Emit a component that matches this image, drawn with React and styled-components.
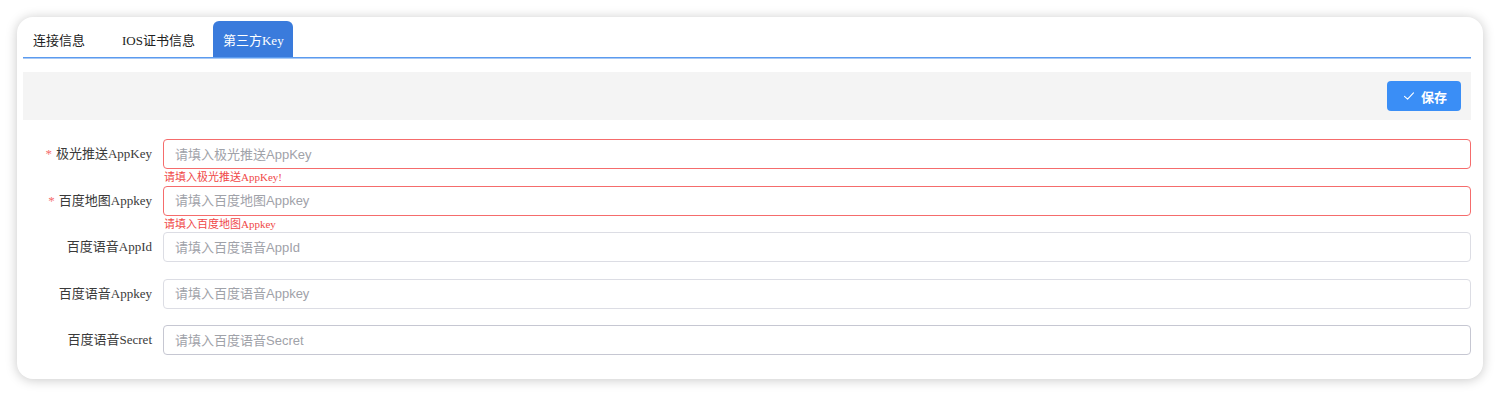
import React from "react";
import styled, { createGlobalStyle } from "styled-components";

const Global = createGlobalStyle`
  html, body { margin: 0; padding: 0; background: #ffffff; }
  body { font-family: "Liberation Serif", "Noto Sans CJK SC", serif; }
  * { box-sizing: border-box; }
`;

const Page = styled.div`
  padding: 17px 17px 17px 17px;
`;

const Card = styled.div`
  background: #ffffff;
  border-radius: 16px;
  box-shadow: 0 1px 12px rgba(0, 0, 0, 0.22);
  padding: 4px 12px 6px 6px;
  height: 362px;
`;

const TabList = styled.div`
  display: flex;
  height: 37px;
  border-bottom: 1px solid #5b9bef;
  box-shadow: 0 1px 0 #a9c9f5;
`;

const Tab = styled.div`
  height: 36px;
  display: flex;
  align-items: center;
  padding: 0 18px;
  font-family: "Liberation Serif", "Noto Sans CJK SC", serif;
  font-size: 13px;
  color: ${(p) => (p.$active ? "#ffffff" : "#222222")};
  background: ${(p) => (p.$active ? "#3a7bdc" : "transparent")};
  border-radius: 6px 6px 0 0;
  &:first-child { padding: 0 19px 0 10px; }
  &:last-child { padding: 0 9px 0 10px; }
`;

const Toolbar = styled.div`
  margin-top: 14px;
  height: 48px;
  background: #f4f4f4;
  display: flex;
  align-items: center;
  justify-content: flex-end;
  padding-right: 10px;
`;

const SaveButton = styled.button`
  width: 74px;
  height: 30px;
  border: none;
  border-radius: 4px;
  background: #3a8ef6;
  color: #ffffff;
  display: flex;
  align-items: center;
  justify-content: center;
  gap: 6px;
  font-family: "Liberation Sans", "Noto Sans CJK SC", sans-serif;
  font-size: 13px;
  font-weight: 600;
  padding: 0 0 0 2px;
`;

const Form = styled.div`
  margin-top: 19px;
`;

const Row = styled.div`
  display: flex;
  align-items: flex-start;
  margin-bottom: 16.5px;
`;

const Label = styled.label`
  width: 140px;
  flex: none;
  text-align: right;
  padding-right: 11px;
  line-height: 30px;
  font-family: "Liberation Serif", "Noto Sans CJK SC", serif;
  font-size: 13px;
  color: #3a3a3a;
`;

const Star = styled.span`
  color: #f56c6c;
  margin-right: 4px;
`;

const Field = styled.div`
  position: relative;
  flex: 1;
`;

const Input = styled.input`
  display: block;
  width: 100%;
  height: 30px;
  border: 1px solid ${(p) => (p.$error ? "#f56c6c" : p.$dark ? "#c6c7d2" : "#dcdde4")};
  border-radius: 4px;
  padding: 0 11px;
  font-family: "Liberation Sans", "Noto Sans CJK SC", sans-serif;
  font-size: 13px;
  color: #333;
  background: #fff;
  outline: none;
  &::placeholder { color: #9fa2a9; }
`;

const ErrorText = styled.div`
  position: absolute;
  left: 1px;
  top: 100%;
  padding-top: 3px;
  font-family: "Liberation Serif", "Noto Sans CJK SC", serif;
  font-size: 11px;
  line-height: 1;
  color: #f04848;
`;

const fields = [
  { label: "极光推送AppKey", required: true, placeholder: "请填入极光推送AppKey", error: "请填入极光推送AppKey!" },
  { label: "百度地图Appkey", required: true, placeholder: "请填入百度地图Appkey", error: "请填入百度地图Appkey" },
  { label: "百度语音AppId", placeholder: "请填入百度语音AppId" },
  { label: "百度语音Appkey", placeholder: "请填入百度语音Appkey" },
  { label: "百度语音Secret", placeholder: "请填入百度语音Secret", dark: true },
];

const Check = () => (
  <svg width="12" height="12" viewBox="0 0 12 12" fill="none">
    <path d="M1.5 6.3 L4.6 9.2 L10.5 2.8" stroke="#ffffff" strokeWidth="1.1" strokeLinecap="round" strokeLinejoin="round" />
  </svg>
);

export default function App() {
  return (
    <>
      <Global />
      <Page>
        <Card>
          <TabList>
            <Tab>连接信息</Tab>
            <Tab>IOS证书信息</Tab>
            <Tab $active>第三方Key</Tab>
          </TabList>
          <Toolbar>
            <SaveButton>
              <Check />
              保存
            </SaveButton>
          </Toolbar>
          <Form>
            {fields.map((f) => (
              <Row key={f.label}>
                <Label>
                  {f.required && <Star>*</Star>}
                  {f.label}
                </Label>
                <Field>
                  <Input placeholder={f.placeholder} $error={!!f.error} $dark={f.dark} />
                  {f.error && <ErrorText>{f.error}</ErrorText>}
                </Field>
              </Row>
            ))}
          </Form>
        </Card>
      </Page>
    </>
  );
}
